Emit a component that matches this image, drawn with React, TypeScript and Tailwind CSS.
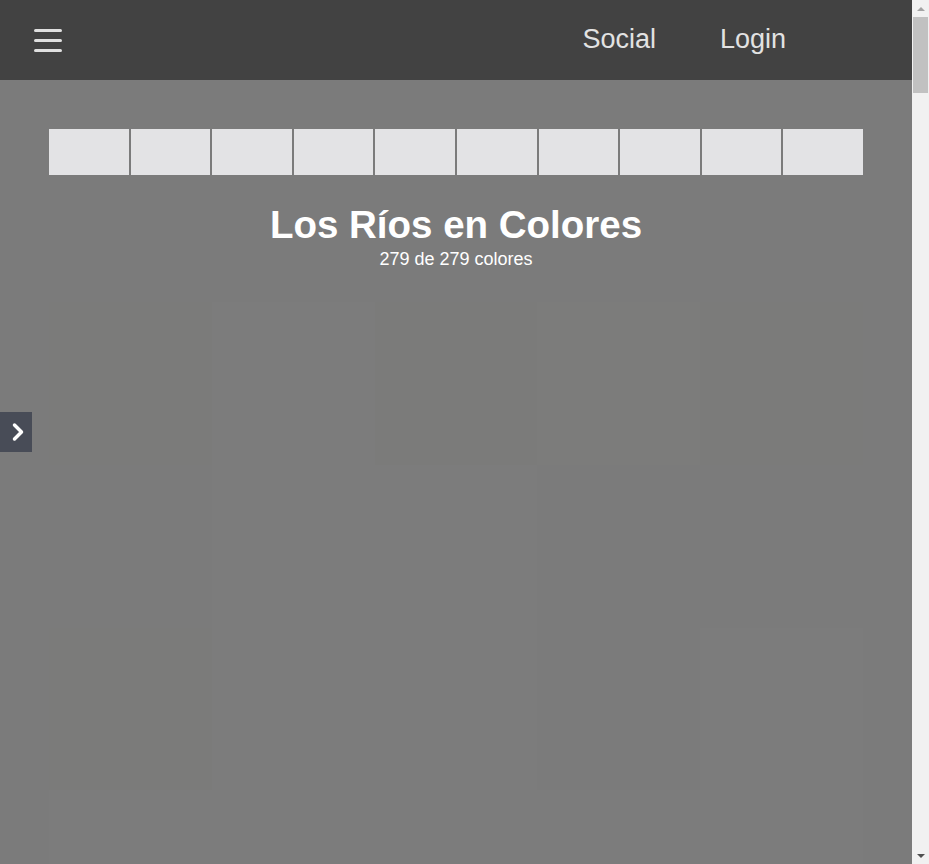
import { ChevronRight } from "lucide-react";

const swatches = Array.from({ length: 10 });

const tiles = [
  "#7b7b7a", "#7c7c7c", "#7b7b7a", "#7c7c7b", "#7b7b7a",
  "#7b7b7b", "#7c7c7c", "#7c7c7c", "#7b7b7b", "#7b7b7b",
  "#7b7b7a", "#7c7c7c", "#7c7c7c", "#7b7b7b", "#7c7c7c",
  "#7c7c7c", "#7c7c7c", "#7c7c7c", "#7c7c7c", "#7c7c7c",
  "#7b7b7b", "#7c7c7c", "#7b7b7b", "#7c7c7c", "#7b7b7b",
];

export default function App() {
  return (
    <div className="min-h-screen bg-[#7b7b7b] font-['Liberation_Sans',Arial,sans-serif]">
      <div className="w-[912px]">
        {/* Header */}
        <header className="h-20 bg-[#424242] flex items-center">
          <button className="ml-[34px] flex flex-col gap-[7px]">
            <span className="block w-7 h-[3px] rounded-sm bg-[#e0e0e0]" />
            <span className="block w-7 h-[3px] rounded-sm bg-[#e0e0e0]" />
            <span className="block w-7 h-[3px] rounded-sm bg-[#e0e0e0]" />
          </button>
          <nav className="ml-auto mr-[126px] flex items-center gap-16 text-[27px] text-[#e2e2e2] -mt-[2px]">
            <a>Social</a>
            <a>Login</a>
          </nav>
        </header>

        <main className="px-12 pt-12">
          {/* Colour bar */}
          <div className="flex h-12">
            {swatches.map((_, i) => (
              <div key={i} className="flex-1 bg-[#e3e3e5] border border-[#7b7b7b]" />
            ))}
          </div>

          <div className="text-center text-white mt-[28px]">
            <h1 className="text-[38.5px] font-bold leading-[42px]">Los Ríos en Colores</h1>
            <p className="text-[18px] leading-5 mt-[3px]">279 de 279 colores</p>
          </div>

          {/* Grid of colours */}
          <div className="grid grid-cols-5 mt-[33px] mx-px">
            {tiles.map((c, i) => (
              <div key={i} className="aspect-square" style={{ backgroundColor: c }} />
            ))}
          </div>
        </main>
      </div>

      {/* Side drawer toggle */}
      <button className="fixed left-0 top-[412px] w-8 h-10 bg-[#484c57] flex items-center justify-center pl-1 text-white">
        <ChevronRight size={28} strokeWidth={3} />
      </button>

      {/* Window scrollbar */}
      <div className="fixed right-0 top-0 h-screen w-[17px] bg-[#f1f1f1] flex flex-col items-center">
        <div className="h-[17px] flex items-center justify-center">
          <span className="block w-0 h-0 border-x-4 border-x-transparent border-b-4 border-b-[#a3a3a3]" />
        </div>
        <div className="w-[15px] h-[76px] bg-[#c1c1c1]" />
        <div className="flex-1" />
        <div className="h-[17px] flex items-center justify-center">
          <span className="block w-0 h-0 border-x-4 border-x-transparent border-t-4 border-t-[#505050]" />
        </div>
      </div>
    </div>
  );
}
